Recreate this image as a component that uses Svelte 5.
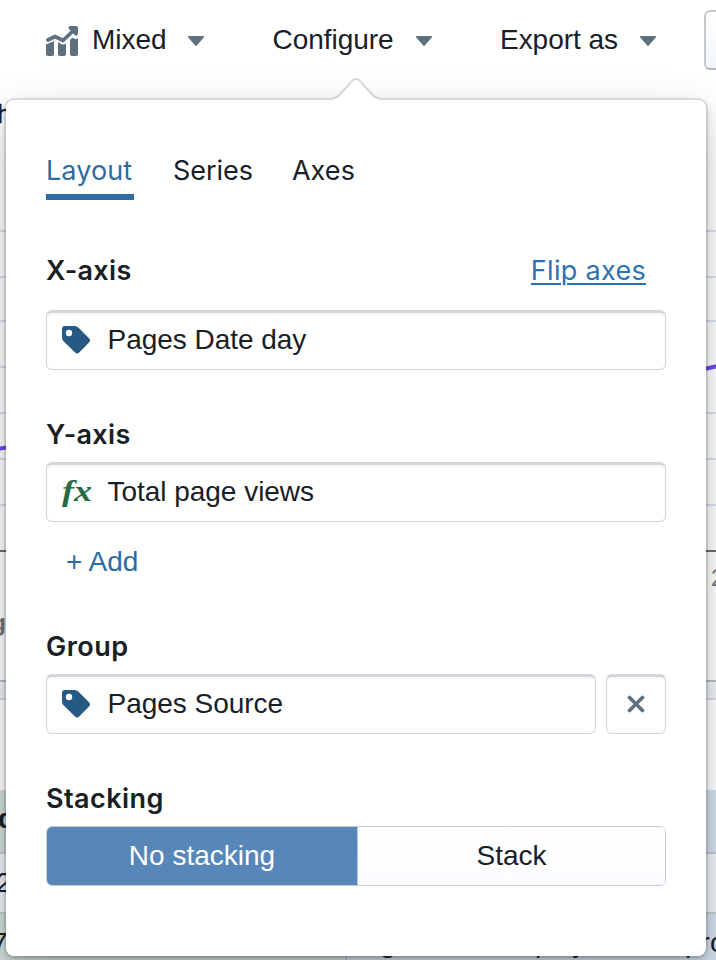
<script>
  const menus = ['Mixed', 'Configure', 'Export as'];
  const tabs = ['Layout', 'Series', 'Axes'];
  let tab = $state('Layout');
  let stacking = $state('No stacking');
</script>

{#snippet caret()}
  <svg class="caret" width="16" height="10" viewBox="0 0 16 10"><path d="M1 0h14q2 0 .7 1.5L9 9.3q-1 1-2 0L.3 1.5Q-1 0 1 0z" fill="#5c7080" /></svg>
{/snippet}

{#snippet tag()}
  <svg class="tag" width="30" height="30" viewBox="0 0 30 30"><path fill="#265a85" fill-rule="evenodd" d="M4 1H13.500q2.200 0 3.800 1.500L28 13.200q2 2.200 0 4.200L18.200 27.400q-2.200 2-4.200 0L2.600 16.200Q1 14.700 1 12.500V4Q1 1 4 1zM8 4.800a3.200 3.200 0 1 0 0 6.400 3.200 3.200 0 0 0 0-6.400z" /></svg>
{/snippet}

<div class="screen">
  <header>
    <button class="menu mixed">
      <svg class="combo" width="32" height="32" viewBox="0 0 32 32" fill="#5c7080">
        <path d="M0 18.500L8 15v13q0 2-2 2H2q-2 0-2-2zM12 16l3.500 2.200q1.500.8 3 0l1.500-1V28q0 2-2 2h-4q-2 0-2-2zM24 14l2.500-2.500q2 2.500 5.500.8V28q0 2-2 2h-4q-2 0-2-2z" />
        <path d="M2 14l7-3.500 8 4L28 4" fill="none" stroke="#5c7080" stroke-width="3.800" stroke-linecap="round" stroke-linejoin="round" />
        <path d="M24 0h6q2 0 2 2v6q-1 3-3.400 1l-5.600-6q-1.500-2 1-3z" />
      </svg>
      <span>{menus[0]}</span>{@render caret()}
    </button>
    <button class="menu configure"><span>{menus[1]}</span>{@render caret()}</button>
    <button class="menu export"><span>{menus[2]}</span>{@render caret()}</button>
    <button class="next" aria-label="More"></button>
  </header>

  <main>
    <div class="chart">
      <span class="cut title">h</span>
      {#each [133, 46, 44, 46, 46, 46, 46] as h}
        <div class="grid" style:height="{h}px"></div>
      {/each}
      <div class="grid axis"></div>
      <svg class="trend" width="716" height="500" fill="none" stroke="#7048e8" stroke-width="4"><path d="M-4 350L10 348M700 271L722 266" /></svg>
      <span class="cut year">2</span>
      <span class="cut legend">g</span>
    </div>
    <div class="divider"></div>
    <div class="space"></div>
    <div class="row head"><b>d</b></div>
    <div class="row"><span>2</span></div>
    <div class="row last"><span class="seven">7</span><div class="cell"><span>Signed</span><span>employee</span><span>prod</span></div></div>
  </main>

  <section class="popover">
    <svg class="arrow" width="60" height="60" viewBox="0 0 30 30"><g transform="rotate(90 15 15)">
      <path fill="#10161a" fill-opacity=".16" d="M8.110 6.302c1.015-.936 1.887-2.922 1.887-4.297v26c0-1.378-.868-3.357-1.888-4.297L.925 17.090c-1.237-1.140-1.233-3.034 0-4.170L8.110 6.302z" />
      <path fill="#fff" d="M8.787 7.036c1.220-1.125 2.210-3.376 2.210-5.030V0v30-2.005c0-1.654-.983-3.900-2.210-5.030l-7.183-6.616c-.81-.746-.802-1.960 0-2.700l7.183-6.614z" />
    </g></svg>
    <nav>
      {#each tabs as name}
        <button class:active={tab === name} onclick={() => (tab = name)}>{name}</button>
      {/each}
    </nav>
    <div class="label"><h3>X-axis</h3><a href="#flip">Flip axes</a></div>
    <div class="field first">{@render tag()}<span>Pages Date day</span></div>
    <h3 class="y">Y-axis</h3>
    <div class="field"><i>fx</i><span>Total page views</span></div>
    <button class="add">+ Add</button>
    <h3 class="group">Group</h3>
    <div class="pair">
      <div class="field">{@render tag()}<span>Pages Source</span></div>
      <button class="field remove" aria-label="Remove group"><svg width="18" height="18" viewBox="0 0 18 18"><path d="M2.500 2.500l13 13M15.500 2.500l-13 13" stroke="#5c7080" stroke-width="3.600" stroke-linecap="round" /></svg></button>
    </div>
    <h3 class="stacking">Stacking</h3>
    <div class="segments">
      {#each ['No stacking', 'Stack'] as name}
        <button class:on={stacking === name} onclick={() => (stacking = name)}>{name}</button>
      {/each}
    </div>
  </section>
</div>

<style>
  :global(body) { margin: 0; overflow: hidden; }
  * { box-sizing: border-box; }
  .screen { position: relative; width: 716px; height: 960px; overflow: hidden; background: #fff; color: #182026; font: 28px/36px "Liberation Sans", Arial, sans-serif; }
  button { padding: 0; border: 0; background: none; color: inherit; font: inherit; }
  header { display: flex; height: 99px; padding-top: 10px; }
  .menu { display: flex; align-items: center; height: 60px; flex: none; text-align: left; letter-spacing: -.04px; }
  .mixed { margin-left: 46px; width: 226.500px; }
  .mixed .caret { margin-left: 21px; }
  .combo { margin-top: 4px; }
  .mixed span { margin-left: 14px; }
  .configure { width: 227.500px; }
  .export { width: 204px; }
  .caret { margin: 2px 0 0 22px; }
  .next { flex: none; width: 80px; height: 60px; border: 2px solid #c6c9cb; border-bottom-color: #b4b7ba; border-radius: 6px; background: linear-gradient(#fff, #f3f6f9); }

  .chart { position: relative; height: 581px; }
  .grid { border-bottom: 2px solid #d8e1eb; }
  .axis { height: 46px; border-color: #6b6d73; }
  .trend { position: absolute; left: 0; top: 0; }
  .cut { position: absolute; }
  .title { left: -3px; top: -3px; font-size: 26px; -webkit-text-stroke: .6px; }
  .year { left: 711px; top: 461px; font-size: 24px; color: #71757a; }
  .legend { right: 710px; top: 506px; font-size: 24px; font-weight: bold; color: #71757a; }
  .divider { height: 20px; background: #eff3f8; border-top: 2px solid #b9bcc0; border-bottom: 2px solid #d9dde3; }
  .space { height: 90px; }
  .row { display: flex; align-items: center; height: 60px; background: #eff4f8; border-bottom: 2px solid #c3cacf; }
  .row > span, .row > b { width: 12px; flex: none; margin-left: -4px; }
  .row > b { margin: -5px 0 0 -2px; width: 10px; }
  .row > .seven { margin-left: -8px; width: 16px; }
  .head { height: 64px; background: linear-gradient(90deg, #d2e0d9 345px, #d3e0ec 345px); }
  .last { background: linear-gradient(90deg, #d2e0d9 345px, #d3e0ec 345px); }
  .cell { display: flex; flex: none; margin-left: 337px; padding-left: 8px; border-left: 2px solid #bcc7d1; height: 60px; line-height: 60px; white-space: nowrap; }
  .cell span:nth-child(1) { width: 141px; }
  .cell span:nth-child(2) { width: 189px; }

  .popover { position: absolute; left: 6px; top: 100px; width: 700px; height: 856px; padding: 46px 40px 0; border-radius: 8px; background: #fff; box-shadow: 0 0 0 2px rgba(16,22,26,.1), 0 4px 8px rgba(16,22,26,.2), 0 16px 48px rgba(16,22,26,.2); }
  .arrow { position: absolute; left: 320px; top: -22px; }
  nav { display: flex; gap: 39px; height: 54px; font: 27px/36px Inter, sans-serif; letter-spacing: .1px; }
  nav button { height: 54px; padding-top: 2px; border-bottom: 6px solid transparent; letter-spacing: inherit; }
  nav .active { width: 88px; text-align: left; color: #2d6ca2; border-color: #2d6ca2; }
  nav button:nth-child(2) { letter-spacing: -.05px; }
  h3 { margin: 0; font: 600 27px/36px Inter, sans-serif; letter-spacing: .3px; }
  .label { display: flex; justify-content: space-between; margin-top: 53px; padding-right: 20px; }
  .label a { font: 27px/36px Inter, sans-serif; color: #2d72b0; text-decoration: underline; text-decoration-thickness: 2px; text-underline-offset: 3px; letter-spacing: .3px; }
  .field { display: flex; align-items: center; width: 620px; height: 60px; padding-left: 14px; border: 1px solid #d0d8df; border-top: 3px solid #d0d6db; border-radius: 6px; background: #fff; box-shadow: inset 0 2px 2px rgba(16,22,26,.04); }
  .field.first { margin-top: 21px; }
  .field span { margin-left: 16.500px; line-height: 36px; position: relative; top: -1px; letter-spacing: -.03px; }
  .tag { flex: none; position: relative; top: -1px; }
  .field i { width: 30px; flex: none; color: #246b43; font: italic bold 30px/36px "Liberation Serif", serif; position: relative; top: -2px; left: 1px; transform: scaleX(1.2); transform-origin: left; }
  h3.y { margin-top: 47px; margin-bottom: 9px; }
  .add { display: block; margin: 22px 0 0 20px; color: #2d6ca2; }
  h3.group { margin-top: 49px; margin-bottom: 9px; letter-spacing: .5px; }
  .pair { display: flex; gap: 10px; }
  .pair > div { width: 550px; }
  .field.remove { width: 60px; padding: 0 0 2px; justify-content: center; }
  h3.stacking { margin-top: 47px; margin-bottom: 9px; letter-spacing: .45px; }
  .segments { display: flex; width: 620px; height: 60px; border: 1px solid #c8ccd0; border-radius: 6px; overflow: hidden; }
  .segments button { width: 308px; background: linear-gradient(#fff, #fbfcff); }
  .segments .on { width: 311px; flex: none; background: #5786b8; color: #fff; border-right: 1px solid #b5c6da; }
</style>
